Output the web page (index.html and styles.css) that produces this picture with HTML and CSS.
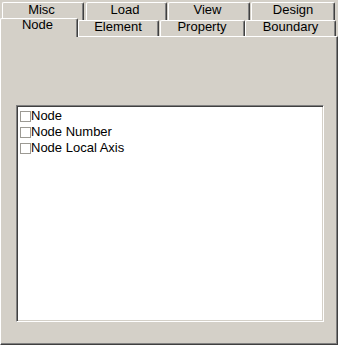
FILE: index.html
```html
<!DOCTYPE html>
<html lang="en">
<head>
    <meta charset="UTF-8">
    <title>Display Options</title>
    <link rel="stylesheet" href="styles.css">
</head>
<body>
    <div class="tab-strip">
        <div class="tab-row back-row">
            <div class="tab">Misc</div>
            <div class="tab">Load</div>
            <div class="tab">View</div>
            <div class="tab">Design</div>
        </div>
        <div class="tab-row front-row">
            <div class="tab active">Node</div>
            <div class="tab">Element</div>
            <div class="tab">Property</div>
            <div class="tab">Boundary</div>
        </div>
    </div>

    <div class="tab-panel">
        <div class="check-list">
            <div class="check-item"><span class="check-box"></span>Node</div>
            <div class="check-item"><span class="check-box"></span>Node Number</div>
            <div class="check-item"><span class="check-box"></span>Node Local Axis</div>
        </div>
    </div>
</body>
</html>
```

FILE: styles.css
```css
body {
    margin: 0;
    width: 338px;
    height: 345px;
    background-color: #d4d0c8;
    font-family: "Liberation Sans", Arial, sans-serif;
    font-size: 13px;
    color: #000;
    overflow: hidden;
}
.tab-strip {
    padding-top: 2px;
}
.tab-row {
    display: flex;
    align-items: flex-start;
}
.tab {
    box-sizing: border-box;
    background-color: #d4d0c8;
    border-top: 1px solid #fff;
    border-left: 1px solid #fff;
    border-right: 1px solid #404040;
    border-radius: 2px 2px 0 0;
    box-shadow: inset -1px 0 #808080;
    text-align: center;
    padding-right: 3px;
    white-space: nowrap;
}

/* back row: Misc / Load / View / Design */
.back-row {
    padding-left: 2px;
    height: 18px;
}
.back-row .tab {
    height: 18px;
    line-height: 14px;
}
.back-row .tab:nth-child(1) { width: 82px; }
.back-row .tab:nth-child(2) { width: 81px; margin-left: 2px; }
.back-row .tab:nth-child(3) { width: 82px; margin-left: 1px; }
.back-row .tab:nth-child(4) { width: 84px; margin-left: 1px; padding-right: 0; }

/* front row: Node / Element / Property / Boundary */
.front-row {
    height: 16px;
}
.front-row .tab {
    height: 16px;
    line-height: 12px;
}
.front-row .tab:nth-child(1) { width: 78px; }
.front-row .tab:nth-child(2) { width: 81px; padding-right: 1px; }
.front-row .tab:nth-child(3) { width: 85px; margin-left: 1px; padding-right: 1px; }
.front-row .tab:nth-child(4) { width: 91px; padding-right: 0; }
.front-row .tab.active {
    position: relative;
    z-index: 1;
    height: 19px;
    margin-top: -2px;
    margin-bottom: -1px;
    padding-top: 0;
}

.tab-panel {
    box-sizing: border-box;
    height: 309px;
    padding: 68px 13px 22px 15px;
    border-top: 1px solid #fff;
    border-left: 1px solid #fff;
    border-right: 1px solid #404040;
    border-bottom: 1px solid #404040;
    box-shadow: inset -1px -1px #808080;
    display: flex;
}
.check-list {
    flex: 1;
    box-sizing: border-box;
    background-color: #fff;
    border: 1px solid;
    border-color: #808080 #fff #fff #808080;
    box-shadow: inset 1px 1px #404040, inset -1px -1px #d4d0c8;
    padding: 2px 2px 0 3px;
}
.check-item {
    display: flex;
    align-items: center;
    height: 16px;
    line-height: 16px;
}
.check-box {
    box-sizing: border-box;
    width: 11px;
    height: 11px;
    border: 1px solid #9c9a94;
    background-color: #fff;
    flex-shrink: 0;
}
```
